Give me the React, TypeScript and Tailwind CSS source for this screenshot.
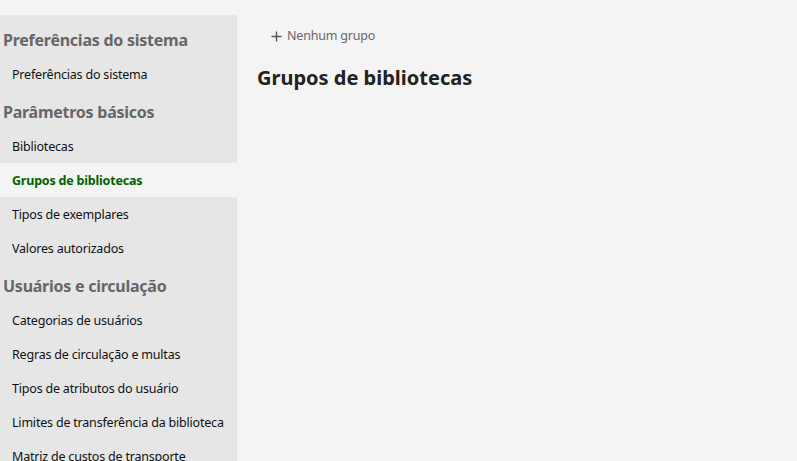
import React from "react";

type Entry = { kind: "h" | "i"; label: string; active?: boolean };

const entries: Entry[] = [
  { kind: "h", label: "Preferências do sistema" },
  { kind: "i", label: "Preferências do sistema" },
  { kind: "h", label: "Parâmetros básicos" },
  { kind: "i", label: "Bibliotecas" },
  { kind: "i", label: "Grupos de bibliotecas", active: true },
  { kind: "i", label: "Tipos de exemplares" },
  { kind: "i", label: "Valores autorizados" },
  { kind: "h", label: "Usuários e circulação" },
  { kind: "i", label: "Categorias de usuários" },
  { kind: "i", label: "Regras de circulação e multas" },
  { kind: "i", label: "Tipos de atributos do usuário" },
  { kind: "i", label: "Limites de transferência da biblioteca" },
  { kind: "i", label: "Matriz de custos de transporte" },
];

export default function App() {
  return (
    <div
      className="w-[797px] h-[461px] overflow-hidden bg-[#f3f4f3] flex"
      style={{ fontFamily: '"Segoe UI", "Noto Sans", "Open Sans", sans-serif' }}
    >
      <div className="w-[237px] shrink-0 mt-[15px] bg-[#e6e6e6] pt-[4px] flex flex-col">
        {entries.map((e, idx) =>
          e.kind === "h" ? (
            <div
              key={idx}
              className="h-[38px] shrink-0 pl-[3px] pt-[10px] text-[16px] leading-[23px] tracking-[-0.25px] font-bold text-[#666666] whitespace-nowrap"
            >
              {e.label}
            </div>
          ) : (
            <div
              key={idx}
              className={
                e.active
                  ? "h-[34px] shrink-0 pl-[12px] pt-[3px] flex items-center text-[12.5px] tracking-[-0.2px] font-bold text-[#006100] bg-[#f3f4f3] whitespace-nowrap"
                  : "h-[34px] shrink-0 pl-[12px] pt-[3px] flex items-center text-[12.5px] tracking-[-0.2px] text-[#111111] whitespace-nowrap"
              }
            >
              {e.label}
            </div>
          )
        )}
      </div>
      <div className="flex-1 pl-[20px] pt-[26px]">
        <div className="flex items-center gap-[5px] pl-[14px] text-[12.5px] tracking-[-0.2px] text-[#696969] h-[20px]">
          <svg width="11" height="11" viewBox="0 0 11 11">
            <path d="M5.5 0.5v10M0.5 5.5h10" stroke="#555" strokeWidth="1.4" />
          </svg>
          <span>Nenhum grupo</span>
        </div>
        <h1 className="mt-[19px] text-[20px] leading-[26px] font-bold text-[#222222]">
          Grupos de bibliotecas
        </h1>
      </div>
    </div>
  );
}
